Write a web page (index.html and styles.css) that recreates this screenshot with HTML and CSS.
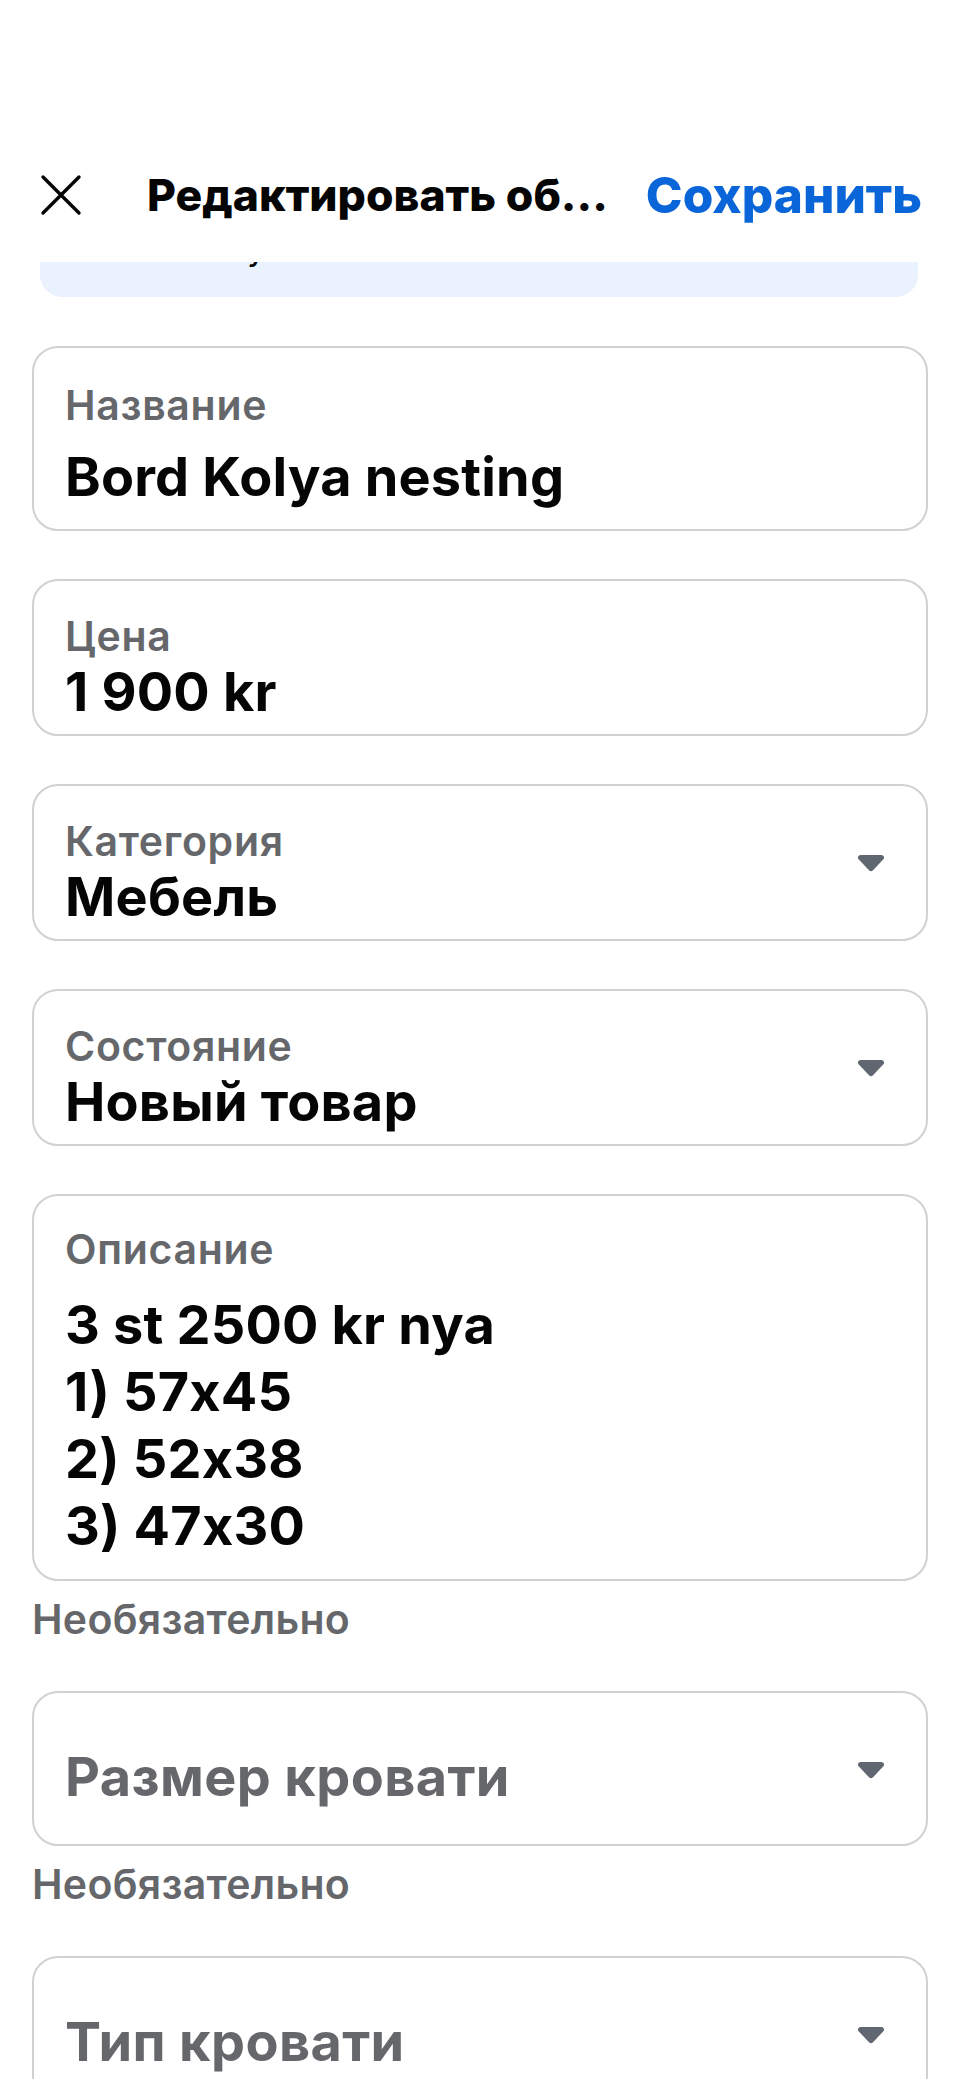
FILE: index.html
```html
<!DOCTYPE html>
<html lang="ru">
<head>
<meta charset="utf-8">
<title>Редактировать объявление</title>
<link rel="stylesheet" href="styles.css">
</head>
<body>
<header class="topbar">
  <div class="topbar-row">
    <button class="close-btn" aria-label="Закрыть">
      <svg width="42" height="42" viewBox="0 0 42 42"><path d="M3 3 L39 39 M39 3 L3 39" stroke="#050505" stroke-width="3.4" stroke-linecap="round" fill="none"/></svg>
    </button>
    <h1 class="title">Редактировать об...</h1>
    <span class="save">Сохранить</span>
  </div>
</header>
<div class="notice"><p class="notice-text">Изменения уже внесены</p></div>
<main class="form">
  <div class="field field-title">
    <div class="label">Название</div>
    <div class="value">Bord Kolya nesting</div>
  </div>
  <div class="field">
    <div class="label">Цена</div>
    <div class="value">1 900 kr</div>
  </div>
  <div class="field select">
    <div class="select-body">
      <div class="label">Категория</div>
      <div class="value">Мебель</div>
    </div>
    <svg class="caret" width="28" height="18" viewBox="0 0 28 18"><path d="M3.5 1 H24.5 A2.6 2.6 0 0 1 26.4 5.3 L16 16.2 A2.8 2.8 0 0 1 12 16.2 L1.6 5.3 A2.6 2.6 0 0 1 3.5 1 Z" fill="#606770"/></svg>
  </div>
  <div class="field select">
    <div class="select-body">
      <div class="label">Состояние</div>
      <div class="value">Новый товар</div>
    </div>
    <svg class="caret" width="28" height="18" viewBox="0 0 28 18"><path d="M3.5 1 H24.5 A2.6 2.6 0 0 1 26.4 5.3 L16 16.2 A2.8 2.8 0 0 1 12 16.2 L1.6 5.3 A2.6 2.6 0 0 1 3.5 1 Z" fill="#606770"/></svg>
  </div>
  <div class="group">
    <div class="field field-desc">
      <div class="label">Описание</div>
      <div class="desc">3 st 2500 kr nya<br>1) 57x45<br>2) 52x38<br>3) 47x30</div>
    </div>
    <div class="helper">Необязательно</div>
  </div>
  <div class="group">
    <div class="field select placeholder-field">
      <div class="placeholder">Размер кровати</div>
      <svg class="caret" width="28" height="18" viewBox="0 0 28 18"><path d="M3.5 1 H24.5 A2.6 2.6 0 0 1 26.4 5.3 L16 16.2 A2.8 2.8 0 0 1 12 16.2 L1.6 5.3 A2.6 2.6 0 0 1 3.5 1 Z" fill="#606770"/></svg>
    </div>
    <div class="helper">Необязательно</div>
  </div>
  <div class="field select placeholder-field">
    <div class="placeholder">Тип кровати</div>
    <svg class="caret" width="28" height="18" viewBox="0 0 28 18"><path d="M3.5 1 H24.5 A2.6 2.6 0 0 1 26.4 5.3 L16 16.2 A2.8 2.8 0 0 1 12 16.2 L1.6 5.3 A2.6 2.6 0 0 1 3.5 1 Z" fill="#606770"/></svg>
  </div>
</main>
</body>
</html>
```

FILE: styles.css
```css
* { box-sizing: border-box; }
html, body { margin: 0; padding: 0; background: #ffffff; }
body {
  font-family: Inter, "Noto Sans", "Liberation Sans", sans-serif;
  font-feature-settings: "calt" 0;
  color: #050505;
  width: 960px;
  height: 2079px;
  overflow: hidden;
}
.topbar {
  height: 262px;
  padding-top: 150px;
  background: #ffffff;
}
.topbar-row {
  height: 90px;
  display: flex;
  align-items: center;
  padding: 0 38px 0 40px;
}
.close-btn {
  width: 42px;
  height: 42px;
  padding: 0;
  border: 0;
  background: none;
  display: flex;
}
.title {
  margin: 0 0 0 65px;
  flex: 1;
  font-size: 44.5px;
  font-weight: 800;
  white-space: nowrap;
  line-height: 56px;
}
.save {
  font-size: 49.5px;
  font-weight: 800;
  color: #0a66d8;
  line-height: 56px;
}
.notice {
  margin: 0 42px 0 40px;
  height: 35px;
  overflow: hidden;
  background: #e9f2fd;
  border-radius: 0 0 22px 22px;
  padding: 0 10px;
}
.notice-text {
  margin: -34px 0 0 0;
  font-size: 34px;
  line-height: 40px;
  white-space: nowrap;
}
.form {
  padding: 49px 32px 0 32px;
  display: flex;
  flex-direction: column;
  gap: 48px;
}
.field {
  border: 2px solid #cfd1d5;
  border-radius: 26px;
  padding: 35px 41px 14px 31px;
}
.label {
  font-size: 41px;
  font-weight: 600;
  color: #65676b;
  line-height: 40px;
  letter-spacing: 0.7px;
}
.value {
  font-size: 54px;
  font-weight: 700;
  line-height: 56px;
  margin-top: 8px;
  letter-spacing: 0.2px;
}
.field-title { padding-top: 37px; padding-bottom: 24px; }
.field-title .value { margin-top: 24px; }
.select {
  display: flex;
  align-items: flex-start;
}
.select-body { flex: 1; }
.caret { flex: none; display: block; margin-top: 33px; }
.group { display: flex; flex-direction: column; }
.field-desc { padding-top: 33px; padding-bottom: 20px; }
.desc {
  font-size: 54px;
  font-weight: 700;
  line-height: 67px;
  margin-top: 22px;
  letter-spacing: 0.2px;
}
.helper {
  margin: 18px 0 0 0;
  font-size: 41px;
  font-weight: 600;
  color: #65676b;
  line-height: 40px;
  letter-spacing: 0.3px;
}
.group + .field, .group + .group { margin-top: 4px; }
.placeholder-field { padding-top: 56px; padding-bottom: 39px; }
.placeholder-field .caret { margin-top: 12px; }
.placeholder {
  flex: 1;
  font-size: 54px;
  font-weight: 700;
  color: #65676b;
  line-height: 56px;
  letter-spacing: 0.4px;
}
```
